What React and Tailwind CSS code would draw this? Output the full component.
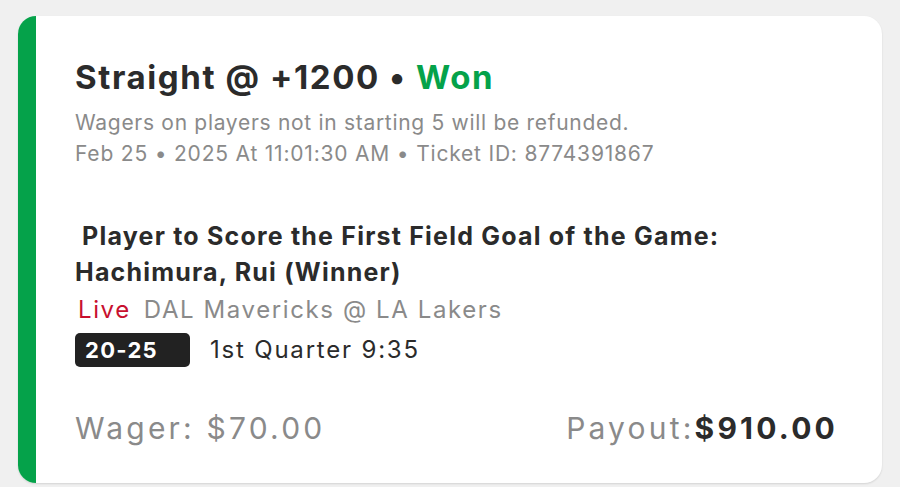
export default function App() {
  return (
    <div className="min-h-[487px] w-full bg-[#f0f0f0] px-[18px] pt-4" style={{ fontFamily: "Inter, 'Noto Sans', sans-serif" }}>
      <div className="flex h-[467px] w-[864px] overflow-hidden rounded-[18px] bg-white shadow-[0_1px_2px_rgba(0,0,0,0.12)]">
        <div className="w-[18px] shrink-0 bg-[#05a24a]" />
        <div className="flex flex-1 flex-col pl-[39px] pr-[44px] pt-[41px]">
          <h1 className="text-[33px] font-bold leading-[40px] tracking-[1.6px] text-[#2b2b2b]">
            Straight @ +1200 • <span className="text-[#05a24a]">Won</span>
          </h1>
          <p className="mt-[12px] text-[21px] leading-[28px] tracking-[0.7px] text-[#8a8a8a]">Wagers on players not in starting 5 will be refunded.</p>
          <p className="mt-[3px] text-[21px] leading-[28px] tracking-[0.8px] text-[#8a8a8a]">Feb 25 • 2025 At 11:01:30 AM • Ticket ID: 8774391867</p>

          <p className="mt-[50px] text-[25px] font-bold leading-[36px] tracking-[1.2px] text-[#2b2b2b]">
            &nbsp;Player to Score the First Field Goal of the Game:
            <br />
            Hachimura, Rui (Winner)
          </p>
          <div className="mt-[5px] flex items-center gap-[13px] pl-[3px] text-[24px] leading-[30px] tracking-[1.6px]">
            <span className="text-[#c8102e]">Live</span>
            <span className="text-[#8a8a8a]">DAL Mavericks @ LA Lakers</span>
          </div>
          <div className="mt-[7px] flex items-center gap-5">
            <span className="flex h-[34px] w-[115px] items-center rounded-[5px] bg-[#222222] pl-[10px] text-[22px] font-bold tracking-[1.3px] text-white">20-25</span>
            <span className="text-[24px] tracking-[1.8px] text-[#2b2b2b]">1st Quarter 9:35</span>
          </div>

          <div className="mt-[42px] flex items-baseline justify-between text-[30px] leading-[36px] tracking-[3.2px]">
            <span className="text-[#8a8a8a]">Wager: $70.00</span>
            <span className="text-[#8a8a8a]">
              Payout:<span className="font-bold text-[#2b2b2b]">$910.00</span>
            </span>
          </div>
        </div>
      </div>
    </div>
  );
}
